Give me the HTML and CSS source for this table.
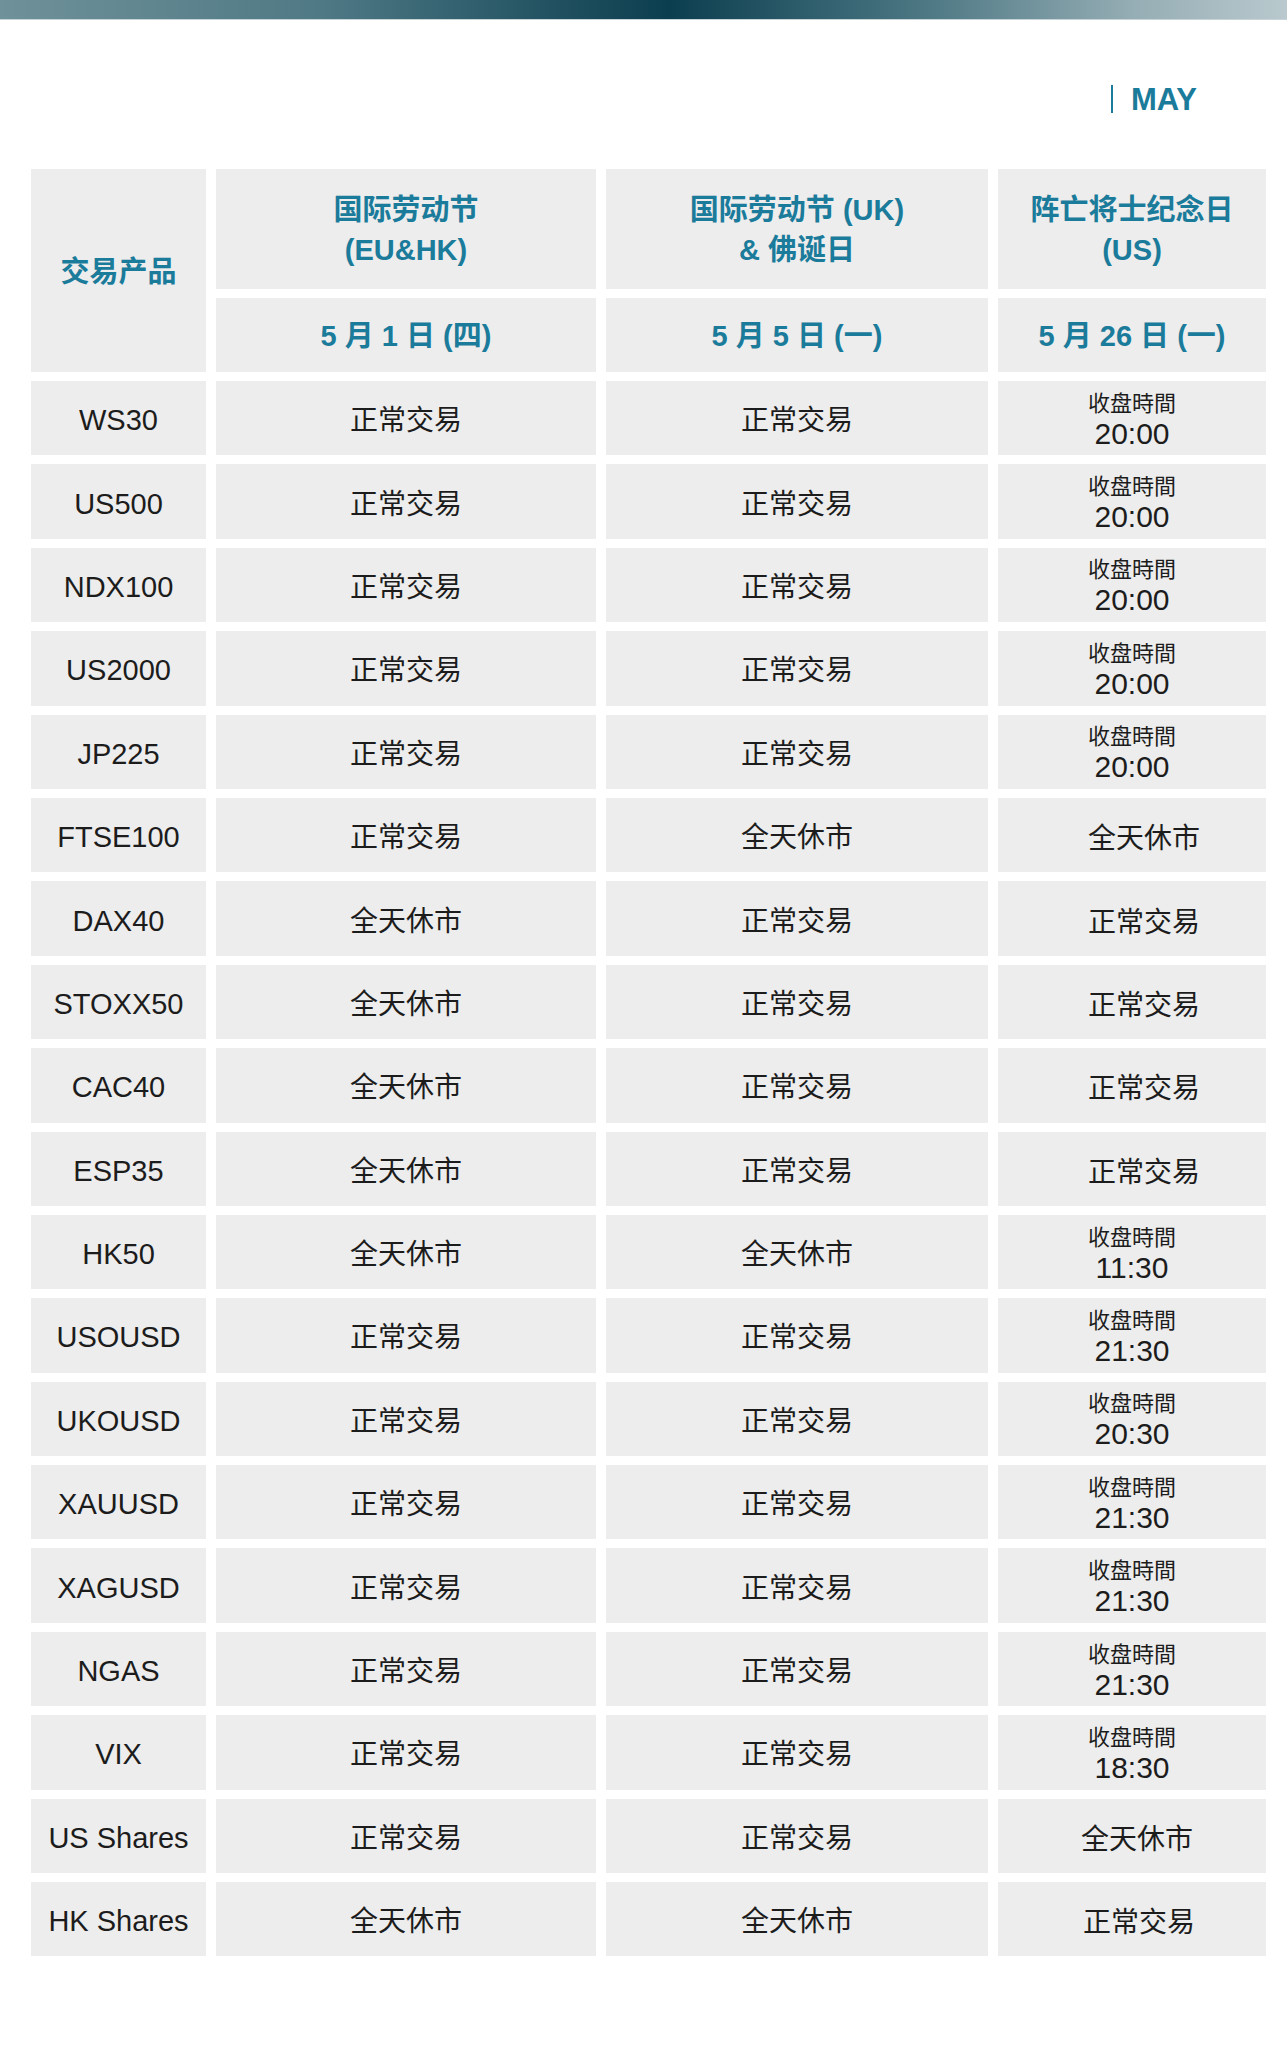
FILE: index.html
```html
<!DOCTYPE html>
<html lang="zh">
<head>
<meta charset="utf-8">
<title>MAY 假期交易安排</title>
<link rel="stylesheet" href="styles.css">
</head>
<body>
<div class="page">
  <div class="topbar"></div>
  <div class="month"><span class="month-rule"></span><span class="month-name">MAY</span></div>

  <div class="table">
    <div class="cell head head-product">交易产品</div>
    <div class="cell head">国际劳动节<br>(EU&amp;HK)</div>
    <div class="cell head">国际劳动节 (UK)<br>&amp; 佛诞日</div>
    <div class="cell head">阵亡将士纪念日<br>(US)</div>
    <div class="cell head date">5 月 1 日 (四)</div>
    <div class="cell head date">5 月 5 日 (一)</div>
    <div class="cell head date">5 月 26 日 (一)</div>

    <div class="cell sym">WS30</div><div class="cell">正常交易</div><div class="cell">正常交易</div><div class="cell close"><span class="lbl">收盘時間</span><span class="time">20:00</span></div>
    <div class="cell sym">US500</div><div class="cell">正常交易</div><div class="cell">正常交易</div><div class="cell close"><span class="lbl">收盘時間</span><span class="time">20:00</span></div>
    <div class="cell sym">NDX100</div><div class="cell">正常交易</div><div class="cell">正常交易</div><div class="cell close"><span class="lbl">收盘時間</span><span class="time">20:00</span></div>
    <div class="cell sym">US2000</div><div class="cell">正常交易</div><div class="cell">正常交易</div><div class="cell close"><span class="lbl">收盘時間</span><span class="time">20:00</span></div>
    <div class="cell sym">JP225</div><div class="cell">正常交易</div><div class="cell">正常交易</div><div class="cell close"><span class="lbl">收盘時間</span><span class="time">20:00</span></div>
    <div class="cell sym">FTSE100</div><div class="cell">正常交易</div><div class="cell">全天休市</div><div class="cell shift">全天休市</div>
    <div class="cell sym">DAX40</div><div class="cell">全天休市</div><div class="cell">正常交易</div><div class="cell shift">正常交易</div>
    <div class="cell sym">STOXX50</div><div class="cell">全天休市</div><div class="cell">正常交易</div><div class="cell shift">正常交易</div>
    <div class="cell sym">CAC40</div><div class="cell">全天休市</div><div class="cell">正常交易</div><div class="cell shift">正常交易</div>
    <div class="cell sym">ESP35</div><div class="cell">全天休市</div><div class="cell">正常交易</div><div class="cell shift">正常交易</div>
    <div class="cell sym">HK50</div><div class="cell">全天休市</div><div class="cell">全天休市</div><div class="cell close"><span class="lbl">收盘時間</span><span class="time">11:30</span></div>
    <div class="cell sym">USOUSD</div><div class="cell">正常交易</div><div class="cell">正常交易</div><div class="cell close"><span class="lbl">收盘時間</span><span class="time">21:30</span></div>
    <div class="cell sym">UKOUSD</div><div class="cell">正常交易</div><div class="cell">正常交易</div><div class="cell close"><span class="lbl">收盘時間</span><span class="time">20:30</span></div>
    <div class="cell sym">XAUUSD</div><div class="cell">正常交易</div><div class="cell">正常交易</div><div class="cell close"><span class="lbl">收盘時間</span><span class="time">21:30</span></div>
    <div class="cell sym">XAGUSD</div><div class="cell">正常交易</div><div class="cell">正常交易</div><div class="cell close"><span class="lbl">收盘時間</span><span class="time">21:30</span></div>
    <div class="cell sym">NGAS</div><div class="cell">正常交易</div><div class="cell">正常交易</div><div class="cell close"><span class="lbl">收盘時間</span><span class="time">21:30</span></div>
    <div class="cell sym">VIX</div><div class="cell">正常交易</div><div class="cell">正常交易</div><div class="cell close"><span class="lbl">收盘時間</span><span class="time">18:30</span></div>
    <div class="cell sym">US Shares</div><div class="cell">正常交易</div><div class="cell">正常交易</div><div class="cell shift-sm">全天休市</div>
    <div class="cell sym">HK Shares</div><div class="cell">全天休市</div><div class="cell">全天休市</div><div class="cell shift-md">正常交易</div>
  </div>
</div>
</body>
</html>
```

FILE: styles.css
```css
* {
  box-sizing: border-box;
}

html, body {
  margin: 0;
  padding: 0;
  background: #ffffff;
}

body {
  font-family: "Liberation Sans", "Noto Sans CJK SC", sans-serif;
  color: #1c1c1c;
}

.page {
  width: 1287px;
  min-height: 2048px;
  background: #ffffff;
}

.topbar {
  height: 20px;
  background: linear-gradient(90deg, #6f9199 0%, #4f7985 25%, #0b3e4f 52%, #4d7884 72%, #95adb4 88%, #b9c9ce 100%);
  border-bottom: 1px solid #c6d3d7;
}

.month {
  display: flex;
  justify-content: flex-end;
  align-items: center;
  height: 28px;
  margin-top: 65px;
  padding-right: 90px;
}

.month-rule {
  width: 2px;
  height: 28px;
  background: #1b7b9b;
}

.month-name {
  margin-left: 18px;
  font-size: 31px;
  line-height: 31px;
  font-weight: 700;
  color: #1b7b9b;
}

.table {
  display: grid;
  grid-template-columns: 175px 380px 382px 268px;
  grid-template-rows: 120px 74px;
  grid-auto-rows: 74.4px;
  column-gap: 10px;
  row-gap: 9px;
  margin: 56px 0 0 31px;
  width: 1235px;
}

.cell {
  background: #ededed;
  display: flex;
  align-items: center;
  justify-content: center;
  text-align: center;
  font-size: 28px;
  line-height: 36px;
  padding-top: 6px;
}

.head {
  color: #1b7b9b;
  font-weight: 700;
  font-size: 29px;
  line-height: 40px;
  padding-top: 2px;
}

.head-product {
  grid-row: span 2;
  font-size: 29px;
}

.date {
  font-size: 29px;
  padding-top: 2px;
}

.sym {
  font-size: 29px;
  padding-top: 4px;
}

.close {
  flex-direction: column;
  padding-top: 5px;
}

.lbl {
  font-size: 22px;
  line-height: 26px;
}

.time {
  font-size: 30px;
  line-height: 34px;
}

.shift {
  padding-left: 24px;
  padding-top: 8px;
}

.shift-sm {
  padding-left: 10px;
  padding-top: 8px;
}

.shift-md {
  padding-left: 14px;
  padding-top: 8px;
}
```
